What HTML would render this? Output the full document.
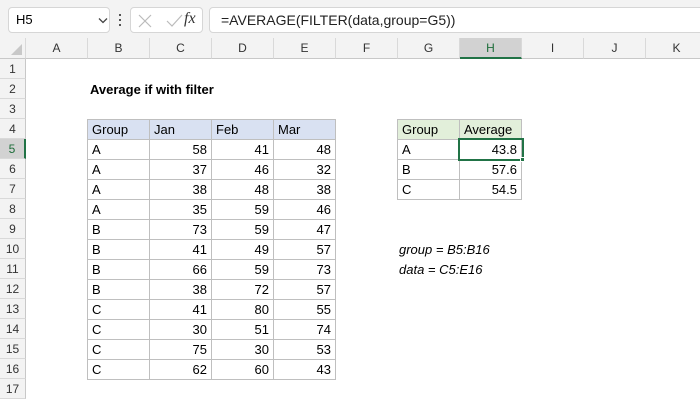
<!DOCTYPE html>
<html><head><meta charset="utf-8"><style>
*{box-sizing:border-box;margin:0;padding:0}
body{width:700px;height:400px;overflow:hidden;background:#fff;font-family:"Liberation Sans",Calibri,sans-serif;font-size:13px;color:#000;position:relative}
.top{position:absolute;left:0;top:0;width:700px;height:38px;background:#f3f3f3}
.box{position:absolute;top:7px;height:26px;background:#fff;border:1px solid #d6d6d6;border-radius:4px}
.ch{position:absolute;top:38px;height:21px;background:#f3f3f3;border-right:1px solid #d9d9d9;border-bottom:1px solid #c8c8c8;text-align:center;line-height:20px;color:#333;font-size:12px}
.rh{position:absolute;left:0;width:26px;height:20px;background:#f3f3f3;border-bottom:1px solid #d9d9d9;border-right:1px solid #c8c8c8;text-align:center;line-height:20px;color:#333;font-size:12px}
.c{position:absolute;height:21px;width:63px;border:1px solid #bfbfbf;line-height:19px;padding:0 4px;white-space:nowrap}
.r{text-align:right}
</style></head><body>
<div class="top"></div>
<div class="box" style="left:8px;width:102px"><span style="position:absolute;left:7px;top:4px;font-size:13px">H5</span><svg style="position:absolute;left:89px;top:9px" width="10" height="7"><path d="M1 1.5L5 5.5L9 1.5" stroke="#444" stroke-width="1.3" fill="none"/></svg></div>
<div style="position:absolute;left:119px;top:14px;width:2px;height:2px;background:#555;box-shadow:0 5px 0 #555,0 10px 0 #555"></div>
<div class="box" style="left:130px;width:73px"><svg style="position:absolute;left:6px;top:5px" width="66" height="16"><path d="M2 2L14 14M14 2L2 14" stroke="#bbb" stroke-width="1.2"/><path d="M30 8L35 13L45 2" stroke="#bbb" stroke-width="1.2" fill="none"/></svg><span style="position:absolute;left:53px;top:2px;font-family:'Liberation Serif',serif;font-style:italic;font-size:16px;color:#333">fx</span></div>
<div class="box" style="left:209px;width:500px"><span style="position:absolute;left:11px;top:4px;font-size:14px;color:#222">=AVERAGE(FILTER(data,group=G5))</span></div>

<div class="ch" style="left:0;width:26px"><svg width="26" height="20"><path d="M22 6L22 17L11 17Z" fill="#c8c8c8"/></svg></div>
<div class="ch" style="left:26px;width:62px">A</div>
<div class="ch" style="left:88px;width:62px">B</div>
<div class="ch" style="left:150px;width:62px">C</div>
<div class="ch" style="left:212px;width:62px">D</div>
<div class="ch" style="left:274px;width:62px">E</div>
<div class="ch" style="left:336px;width:62px">F</div>
<div class="ch" style="left:398px;width:62px">G</div>
<div class="ch" style="left:460px;width:62px;background:#d2d2d2;color:#1e6e3a;border-bottom:2px solid #217346">H</div>
<div class="ch" style="left:522px;width:62px">I</div>
<div class="ch" style="left:584px;width:62px">J</div>
<div class="ch" style="left:646px;width:62px">K</div>

<div class="rh" style="top:59px">1</div>
<div class="rh" style="top:79px">2</div>
<div class="rh" style="top:99px">3</div>
<div class="rh" style="top:119px">4</div>
<div class="rh" style="top:139px;background:#d2d2d2;color:#1e6e3a;border-right:2px solid #217346">5</div>
<div class="rh" style="top:159px">6</div>
<div class="rh" style="top:179px">7</div>
<div class="rh" style="top:199px">8</div>
<div class="rh" style="top:219px">9</div>
<div class="rh" style="top:239px">10</div>
<div class="rh" style="top:259px">11</div>
<div class="rh" style="top:279px">12</div>
<div class="rh" style="top:299px">13</div>
<div class="rh" style="top:319px">14</div>
<div class="rh" style="top:339px">15</div>
<div class="rh" style="top:359px">16</div>
<div class="rh" style="top:379px">17</div>

<div style="position:absolute;left:90px;top:82px;font-weight:bold;font-size:13px">Average if with filter</div>

<div class="c" style="left:87px;top:119px;background:#d9e1f2">Group</div><div class="c" style="left:149px;top:119px;background:#d9e1f2">Jan</div><div class="c" style="left:211px;top:119px;background:#d9e1f2">Feb</div><div class="c" style="left:273px;top:119px;background:#d9e1f2">Mar</div>
<div class="c" style="left:87px;top:139px">A</div><div class="c r" style="left:149px;top:139px">58</div><div class="c r" style="left:211px;top:139px">41</div><div class="c r" style="left:273px;top:139px">48</div>
<div class="c" style="left:87px;top:159px">A</div><div class="c r" style="left:149px;top:159px">37</div><div class="c r" style="left:211px;top:159px">46</div><div class="c r" style="left:273px;top:159px">32</div>
<div class="c" style="left:87px;top:179px">A</div><div class="c r" style="left:149px;top:179px">38</div><div class="c r" style="left:211px;top:179px">48</div><div class="c r" style="left:273px;top:179px">38</div>
<div class="c" style="left:87px;top:199px">A</div><div class="c r" style="left:149px;top:199px">35</div><div class="c r" style="left:211px;top:199px">59</div><div class="c r" style="left:273px;top:199px">46</div>
<div class="c" style="left:87px;top:219px">B</div><div class="c r" style="left:149px;top:219px">73</div><div class="c r" style="left:211px;top:219px">59</div><div class="c r" style="left:273px;top:219px">47</div>
<div class="c" style="left:87px;top:239px">B</div><div class="c r" style="left:149px;top:239px">41</div><div class="c r" style="left:211px;top:239px">49</div><div class="c r" style="left:273px;top:239px">57</div>
<div class="c" style="left:87px;top:259px">B</div><div class="c r" style="left:149px;top:259px">66</div><div class="c r" style="left:211px;top:259px">59</div><div class="c r" style="left:273px;top:259px">73</div>
<div class="c" style="left:87px;top:279px">B</div><div class="c r" style="left:149px;top:279px">38</div><div class="c r" style="left:211px;top:279px">72</div><div class="c r" style="left:273px;top:279px">57</div>
<div class="c" style="left:87px;top:299px">C</div><div class="c r" style="left:149px;top:299px">41</div><div class="c r" style="left:211px;top:299px">80</div><div class="c r" style="left:273px;top:299px">55</div>
<div class="c" style="left:87px;top:319px">C</div><div class="c r" style="left:149px;top:319px">30</div><div class="c r" style="left:211px;top:319px">51</div><div class="c r" style="left:273px;top:319px">74</div>
<div class="c" style="left:87px;top:339px">C</div><div class="c r" style="left:149px;top:339px">75</div><div class="c r" style="left:211px;top:339px">30</div><div class="c r" style="left:273px;top:339px">53</div>
<div class="c" style="left:87px;top:359px">C</div><div class="c r" style="left:149px;top:359px">62</div><div class="c r" style="left:211px;top:359px">60</div><div class="c r" style="left:273px;top:359px">43</div>

<div class="c" style="left:397px;top:119px;background:#e2efda">Group</div><div class="c" style="left:459px;top:119px;background:#e2efda">Average</div>
<div class="c" style="left:397px;top:139px">A</div><div class="c r" style="left:459px;top:139px">43.8</div>
<div class="c" style="left:397px;top:159px">B</div><div class="c r" style="left:459px;top:159px">57.6</div>
<div class="c" style="left:397px;top:179px">C</div><div class="c r" style="left:459px;top:179px">54.5</div>
<div style="position:absolute;left:458px;top:138px;width:66px;height:23px;border:2px solid #217346"></div>
<div style="position:absolute;left:520px;top:157px;width:5px;height:5px;background:#217346;border:1px solid #fff"></div>

<div style="position:absolute;left:399px;top:242px;font-style:italic">group = B5:B16</div>
<div style="position:absolute;left:399px;top:262px;font-style:italic">data = C5:E16</div>
</body></html>
